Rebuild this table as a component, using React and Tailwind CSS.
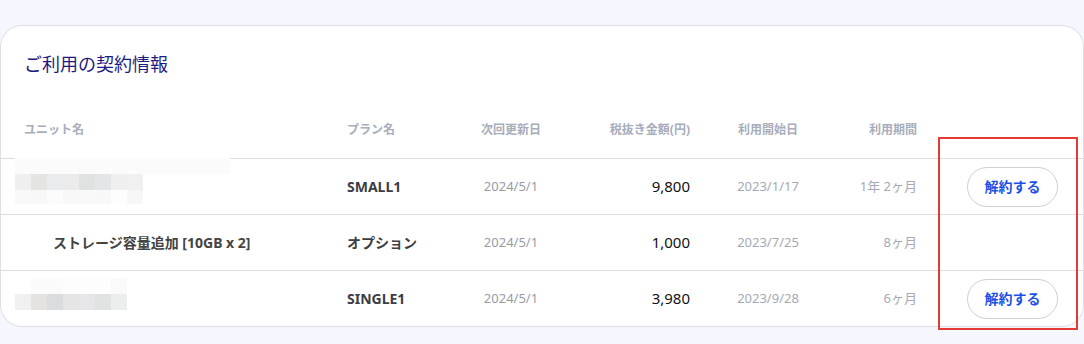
const font = { fontFamily: '"Noto Sans", "Noto Sans CJK JP", sans-serif' };

const rows = [
  {
    unit: "blur1",
    plan: "SMALL1",
    next: "2024/5/1",
    price: "9,800",
    start: "2023/1/17",
    period: "1年 2ヶ月",
    cancel: true,
  },
  {
    unit: "ストレージ容量追加 [10GB x 2]",
    plan: "オプション",
    next: "2024/5/1",
    price: "1,000",
    start: "2023/7/25",
    period: "8ヶ月",
    cancel: false,
  },
  {
    unit: "blur3",
    plan: "SINGLE1",
    next: "2024/5/1",
    price: "3,980",
    start: "2023/9/28",
    period: "6ヶ月",
    cancel: true,
  },
];

const cols = "grid grid-cols-[346px_114px_100px_129px_156px_71px_1fr]";

const BlurOne = () => (
  <div className="-mt-px flex flex-col self-start pl-[14px]">
    <div className="h-4 w-[215px] bg-[#fbfbfb]" />
    <div className="flex h-4">
      <div className="w-4 bg-[#efefef]" />
      <div className="w-4 bg-[#e4e4e2]" />
      <div className="w-4 bg-[#eaebee]" />
      <div className="w-4 bg-[#ebebeb]" />
      <div className="w-4 bg-[#e0e2e1]" />
      <div className="w-4 bg-[#e4e5e7]" />
      <div className="w-4 bg-[#efefef]" />
      <div className="w-4 bg-[#f0f0f0]" />
    </div>
    <div className="flex h-[14px]">
      <div className="w-4 bg-[#f9f9f9]" />
      <div className="w-4 bg-[#f8f8f8]" />
      <div className="w-4 bg-[#fcfcfc]" />
      <div className="w-4 bg-[#f8f8f8]" />
      <div className="w-4 bg-[#f9f9f9]" />
      <div className="w-4 bg-[#f8f8f8]" />
      <div className="w-4 bg-[#fdfdfd]" />
      <div className="w-4 bg-[#f7f7f7]" />
    </div>
  </div>
);

const BlurThree = () => (
  <div className="mt-[7px] flex flex-col self-start pl-[14px]">
    <div className="flex h-4">
      <div className="w-4 bg-white" />
      <div className="w-4 bg-[#fbfbfb]" />
      <div className="w-4 bg-[#fbfbfb]" />
      <div className="w-4 bg-[#fdfdfd]" />
      <div className="w-4 bg-[#fdfdfd]" />
      <div className="w-4 bg-[#fdfdfd]" />
      <div className="w-4 bg-[#fafafa]" />
    </div>
    <div className="flex h-4">
      <div className="w-4 bg-[#f0f0f0]" />
      <div className="w-4 bg-[#e4e3e1]" />
      <div className="w-4 bg-[#dadcdf]" />
      <div className="w-4 bg-[#e5e5e5]" />
      <div className="w-4 bg-[#e6e6e8]" />
      <div className="w-4 bg-[#e1e3e2]" />
      <div className="w-4 bg-[#eceeed]" />
    </div>
  </div>
);

export default function App() {
  return (
    <div className="min-h-[344px] bg-[#f4f7fd] pt-[25px]" style={font}>
      <div className="relative h-[302px] w-[1084px] rounded-[22px] border border-[#dedfe3] bg-white">
        <h2 className="pl-[23px] pt-[25px] text-[18px] leading-[27px] text-[#1e1a80]">
          ご利用の契約情報
        </h2>

        <div
          className={`${cols} h-[81px] items-end border-b border-[#dddddd] pb-[19px] text-[12px] font-bold leading-[18px] text-[#a7adbb]`}
        >
          <div className="pl-[23px]">ユニット名</div>
          <div>プラン名</div>
          <div className="text-center">次回更新日</div>
          <div className="text-right">税抜き金額(円)</div>
          <div className="text-center">利用開始日</div>
          <div className="text-right">利用期間</div>
          <div />
        </div>

        {rows.map((r, i) => (
          <div
            key={i}
            className={`${cols} items-center ${
              i < rows.length - 1 ? "h-[56px] border-b border-[#dddddd]" : "h-[55px]"
            }`}
          >
            {r.unit === "blur1" ? (
              <BlurOne />
            ) : r.unit === "blur3" ? (
              <BlurThree />
            ) : (
              <div className="pl-[52px] text-[14px] font-bold text-[#444444]">{r.unit}</div>
            )}
            <div className="text-[14px] font-bold text-[#3d3d45]">{r.plan}</div>
            <div className="text-center text-[13px] text-[#9a9aa6]">{r.next}</div>
            <div className="text-right text-[15px] text-[#111111]">{r.price}</div>
            <div className="text-center text-[13px] text-[#a5a9b6]">{r.start}</div>
            <div className="text-right text-[13px] text-[#a5a9b6]">{r.period}</div>
            <div className="pl-[50px]">
              {r.cancel && (
                <button className="h-10 w-[91px] rounded-full border border-[#d0d0d0] bg-white text-[14px] font-bold text-[#1b50e6]">
                  解約する
                </button>
              )}
            </div>
          </div>
        ))}

        <div className="pointer-events-none absolute left-[937px] top-[111px] h-[193px] w-[140px] border-2 border-[#e53935]" />
      </div>
    </div>
  );
}
